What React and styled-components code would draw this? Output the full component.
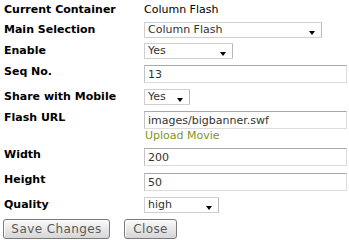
import styled, { createGlobalStyle } from 'styled-components';

const GlobalStyle = createGlobalStyle`
    body {
        margin: 0;
        background: #fff;
        font-family: "DejaVu Sans", Verdana, sans-serif;
        font-size: 11px;
        color: #000;
    }
`

const fields = [
    { label: "Main Selection", kind: "select", value: "Column Flash", width: 178 },
    { label: "Enable", kind: "select", value: "Yes", width: 89 },
    { label: "Seq No.", kind: "input", value: "13" },
    { label: "Share with Mobile", kind: "select", value: "Yes", width: 46 },
    { label: "Flash URL", kind: "input", value: "images/bigbanner.swf", link: "Upload Movie" },
    { label: "Width", kind: "input", value: "200" },
    { label: "Height", kind: "input", value: "50" },
    { label: "Quality", kind: "select", value: "high", width: 75 },
]

export default function App() {
    return (
        <>
            <GlobalStyle />
            <Form>
                <Row>
                    <Label>Current Container</Label>
                    <Value>Column Flash</Value>
                </Row>
                {fields.map((f) => (
                    <Row key={f.label}>
                        <Label>{f.label}</Label>
                        <Cell>
                            {f.kind === "select" ? (
                                <SelectBox $width={f.width}>
                                    <Select defaultValue={f.value}>
                                        <option>{f.value}</option>
                                    </Select>
                                    <Arrow />
                                </SelectBox>
                            ) : (
                                <Input defaultValue={f.value} />
                            )}
                            {f.link && <UploadLink href="#">{f.link}</UploadLink>}
                        </Cell>
                    </Row>
                ))}
                <Buttons>
                    <Button $width={107}>Save Changes</Button>
                    <Button $width={53}>Close</Button>
                </Buttons>
            </Form>
        </>
    )
}


// styled-components
const Form = styled.div`
    width: 349px;
    padding: 2px 2px 0 4px;
    box-sizing: border-box;
    display: flex;
    flex-direction: column;
    gap: 5px;
`

const Row = styled.div`
    display: grid;
    grid-template-columns: 140px 1fr;
    align-items: start;
`

const Label = styled.div`
    font-weight: bold;
    line-height: 15px;
    white-space: nowrap;
`

const Value = styled.div`
    line-height: 15px;
`

const Cell = styled.div`
    display: flex;
    flex-direction: column;
    align-items: flex-start;
`

const SelectBox = styled.div`
    position: relative;
    width: ${p => p.$width}px;
    height: 16px;
`

const Select = styled.select`
    appearance: none;
    -webkit-appearance: none;
    width: 100%;
    height: 100%;
    margin: 0;
    padding: 0 0 0 3px;
    border: 1px solid #cfcfcf;
    border-right-color: #b8b8b8;
    border-radius: 1px;
    background: #fff;
    font: inherit;
    line-height: 14px;
    color: #333;
    box-sizing: border-box;
    outline: none;
`

const Arrow = styled.span`
    position: absolute;
    right: 7px;
    top: 9px;
    width: 0;
    height: 0;
    border-left: 3.5px solid transparent;
    border-right: 3.5px solid transparent;
    border-top: 4px solid #000;
    pointer-events: none;
`

const Input = styled.input`
    width: 203px;
    height: 18px;
    margin: 1px 0;
    padding: 0 3px;
    border: 1px solid #dcdcdc;
    border-top-color: #a8a8a8;
    border-left-color: #c4c4c4;
    background: #fff;
    font: inherit;
    color: #333;
    box-sizing: border-box;
    outline: none;
`

const UploadLink = styled.a`
    color: #80961a;
    text-decoration: none;
    line-height: 12px;
    padding-left: 1px;
`

const Buttons = styled.div`
    display: flex;
    gap: 14px;
    margin-top: 1px;
    margin-left: -1px;
`

const Button = styled.button`
    width: ${p => p.$width}px;
    height: 20px;
    padding: 0;
    border: 1px solid #7a7a7a;
    border-radius: 3px;
    background: linear-gradient(#fafafa, #e6e6e6 55%, #d6d6d6);
    box-shadow: inset 1px 1px 0 #fff;
    font-family: "DejaVu Sans", Verdana, sans-serif;
    font-size: 12px;
    color: #5a5a5a;
    letter-spacing: 0.4px;
`
